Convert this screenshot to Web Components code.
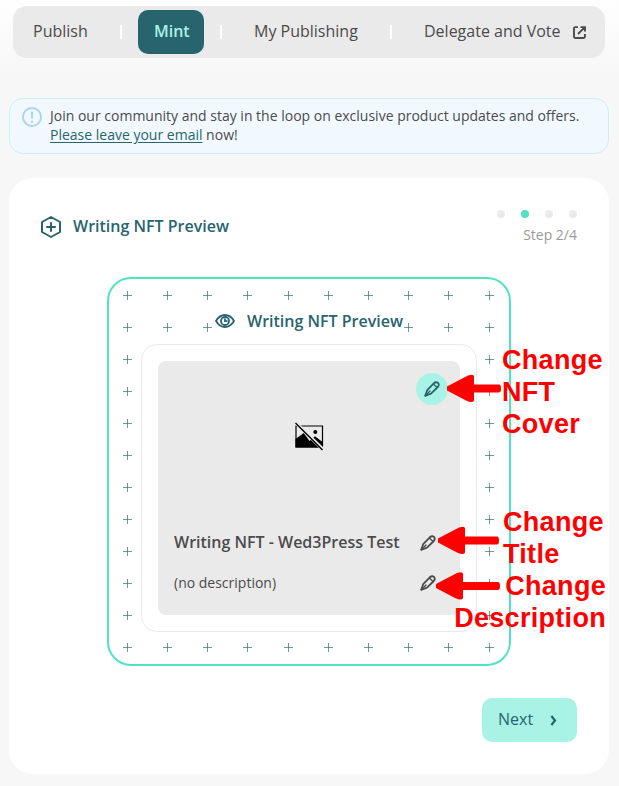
<!DOCTYPE html>
<html lang="en">
<head>
<meta charset="utf-8">
<title>Writing NFT Preview</title>
<style>
html{height:100%}
body{margin:0;height:786px;overflow:hidden;background:#f7f7f7 linear-gradient(#fefefe,#f7f7f7 77px) no-repeat;background-size:100% 77px;font-family:"Open Sans","Noto Sans",sans-serif;color:#4b4b4b}
</style>
</head>
<body>
<mint-page></mint-page>
<script>
const define = (name, html, setup) => customElements.define(name, class extends HTMLElement {
  constructor() {
    super();
    const t = document.createElement('template');
    t.innerHTML = html;
    this.attachShadow({ mode: 'open' }).append(t.content.cloneNode(true));
    if (setup) setup(this.shadowRoot, this);
  }
});

define('pencil-icon', `<style>:host{display:block;width:16px;height:16px}svg{display:block}</style>
<svg width="16" height="16" viewBox="0 0 16 16" fill="none" stroke="currentColor" stroke-width="1.8" stroke-linejoin="round" stroke-linecap="round"><path d="M1.2 14.8 3.2 9.2 9.8 2.3Q12 .4 14 1.9 15.6 3.8 13.8 6L7 12.7Z"/><path d="M1.2 14.8 6 10" stroke-width="1.3"/><path d="M9.8 3.4 12.8 6.2" stroke-width="1.3"/></svg>`);

define('nav-item', `<style>:host{display:flex;align-items:center;height:44px;font-size:16px;line-height:22px;gap:12px;white-space:nowrap;box-sizing:border-box;padding:0 16px 2px;border-radius:10px}
:host([active]){background:#28646e;color:#a9f2e6;font-weight:600}</style><slot></slot>`);

define('nav-divider', `<style>:host{display:block;width:2px;height:14px;background:#fff}</style>`);

define('top-nav', `<style>:host{display:grid;grid-template-columns:103px 2px 16px 66px 16px 2px 16px 136px 16px 2px 16px 1fr;align-items:center;box-sizing:border-box;margin:6px 14px 0 13px;height:52px;padding-left:4px;border-radius:14px;background:#eaeaea}
i{display:block}svg{display:block;margin-top:2px}</style>
<nav-item>Publish</nav-item><nav-divider></nav-divider><i></i><nav-item active>Mint</nav-item><i></i><nav-divider></nav-divider><i></i><nav-item>My Publishing</nav-item><i></i><nav-divider></nav-divider><i></i>
<nav-item>Delegate and Vote<svg width="13" height="13" viewBox="0 0 13 13" fill="none" stroke="currentColor" stroke-width="1.9"><path d="M5 1.1H2.2Q1 1.1 1 2.3V10.8Q1 12 2.2 12H10.7Q11.9 12 11.9 10.8V8M5 8 11.3 1.7M7.5 1.1H12V5.5"/></svg></nav-item>`);

define('info-banner', `<style>:host{display:flex;box-sizing:border-box;margin:40px 10px 0 9px;height:56px;padding:7px 12px;gap:8px;border:1px solid #cbedff;border-radius:14px;background:#f1f9ff;font-size:14px;line-height:19px;white-space:nowrap}
svg{flex:none;display:block;margin-top:1px}</style>
<svg width="20" height="20" viewBox="0 0 20 20" fill="none" stroke="#a9d5e6" stroke-width="2"><circle cx="10" cy="10" r="9"/><path d="M10 4.4V11.6M10 13.8V15.8"/></svg>
<div><slot></slot></div>`);

define('step-dots', `<style>:host{display:flex;flex-direction:column;align-items:flex-end;font-size:14px;line-height:20px;color:#999}
div{display:flex;gap:16px;margin-bottom:7px}i{width:8px;height:8px;border-radius:50%;background:#eaeaea}i.on{background:#50e3c2}</style>
<div><i></i><i class="on"></i><i></i><i></i></div><span>Step 2/4</span>`);

define('section-title', `<style>:host{display:flex;align-items:center;gap:12px;font-size:16px;line-height:22px;font-weight:600;color:#28646e;white-space:nowrap}::slotted(svg){display:block;flex:none}</style><slot name="icon"></slot><span><slot></slot></span>`);

define('edit-row', `<style>:host{display:flex;align-items:center;justify-content:space-between;white-space:nowrap;height:22px}pencil-icon{margin-top:2px}</style><slot></slot><pencil-icon></pencil-icon>`);

define('nft-cover', `<style>:host{display:flex;flex-direction:column;box-sizing:border-box;width:302px;height:254px;border-radius:8px;background:#eaeaea;padding:12px 24px 0 16px}
.edit{align-self:flex-end;display:grid;place-items:center;width:32px;height:32px;border-radius:50%;background:#a9f2e6;color:#28646e;margin-right:-12px}
.broken{display:block;align-self:center;margin:16px 0 0 8px}
.t{font-size:16px;font-weight:600;margin-top:80px}.d{font-size:14px;margin-top:18px}</style>
<div class="edit"><pencil-icon></pencil-icon></div>
<svg class="broken" width="30" height="30" viewBox="0 0 30 30"><path d="M2 5H28.5V26H2Z" fill="none" stroke="#000" stroke-width="1.2"/><path d="M1.5 18 9.8 12 15.5 20 21 15.3 28.5 21V26.5H1.5Z"/><circle cx="21.3" cy="11" r="2"/><path d="M2 2 29 28.5" stroke="#eaeaea" stroke-width="3.4"/><path d="M1.5 2 28.5 29" stroke="#000" stroke-width="1.4"/></svg>
<edit-row class="t"><span>Writing NFT - Wed3Press Test</span></edit-row>
<edit-row class="d"><span>(no description)</span></edit-row>`);

define('preview-frame', `<style>:host{display:grid;box-sizing:border-box;width:404px;height:389px;border:2px solid #50e3c2;border-radius:24px}
#grid,main{grid-area:1/1}#grid{display:block}main{display:flex;flex-direction:column;align-items:center;padding-top:31px}
section-title{background:#fff}.box{display:grid;place-items:center;box-sizing:border-box;width:336px;height:288px;margin-top:12px;border:1px solid #eaeaea;border-radius:16px;background:#fff}</style>
<svg id="grid" width="400" height="385" stroke="#28646e" stroke-opacity=".65" stroke-width="1"><path/></svg>
<main><section-title><svg slot="icon" width="20" height="14" viewBox="0 0 20 14" fill="none" stroke="#28646e" stroke-width="1.8"><path d="M1 7Q4.5 1 10 1T19 7Q15.5 13 10 13T1 7Z"/><circle cx="10" cy="7" r="4"/><path d="M10 4.5V7.2H12.5"/></svg>Writing NFT Preview</section-title>
<div class="box"><nft-cover></nft-cover></div></main>`, root => {
  const cols = [18, 58, 98, 138, 179, 219, 259, 299, 339, 380];
  let d = '';
  for (let r = 0; r < 12; r++) for (const x of cols) {
    const y = 16 + r * 32;
    d += `M${x - 4} ${y + .5}h9M${x + .5} ${y - 4}v9`;
  }
  root.querySelector('#grid path').setAttribute('d', d);
});

define('next-button', `<style>:host{display:flex;align-items:center;gap:17px;box-sizing:border-box;width:95px;height:44px;padding:0 0 2px 16px;border-radius:10px;background:#a9f2e6;color:#28646e;font-size:16px;line-height:22px}svg{display:block;margin-top:2px}</style><slot></slot>
<svg width="7" height="11" viewBox="0 0 7 11" fill="none" stroke="currentColor" stroke-width="2.2"><path d="M1.4 1 5 5.5 1.4 10"/></svg>`);

define('red-notes', `<style>:host{position:absolute;inset:0;width:619px;height:786px;pointer-events:none;color:#f00;font:bold 27px/32px "Liberation Sans",Arial,sans-serif}
svg{position:absolute;left:0;top:0}p{position:absolute;margin:0;white-space:pre;letter-spacing:.3px}</style>
<svg width="619" height="786" fill="#f00"><path id="a"/><path id="b"/><path id="c"/></svg>
<p style="left:502px;top:344px">Change
NFT
Cover</p><p style="left:503px;top:506px">Change
Title</p><p style="right:13px;top:570px;text-align:right">Change
Description</p>`, root => {
  const arrow = (x, y, end) => `M${x} ${y - 2}L${x + 21} ${y - 13}Q${x + 27} ${y - 15} ${x + 27} ${y - 12}V${y - 4}H${end - 2}Q${end} ${y - 4} ${end} ${y}T${end - 2} ${y + 4}H${x + 27}V${y + 12}Q${x + 26} ${y + 15} ${x + 19} ${y + 12}L${x} ${y + 2}Z`;
  [['a', 447, 388.5, 501], ['b', 438, 540.5, 499], ['c', 436, 586, 500]].forEach(([id, ...v]) => root.getElementById(id).setAttribute('d', arrow(...v)));
});

define('wizard-card', `<style>:host{display:flex;flex-direction:column;box-sizing:border-box;margin:24px 10px 0 9px;height:596px;padding:32px;border-radius:24px;background:#fff}
header{display:flex;justify-content:space-between;height:67px}header section-title{height:31px}header section-title svg{margin-top:2px}
preview-frame{align-self:center;margin-left:0}next-button{align-self:flex-end;margin-top:32px}</style>
<header><section-title><svg slot="icon" width="20" height="22" viewBox="0 0 20 22" fill="none" stroke="#28646e" stroke-width="2" stroke-linejoin="round"><path d="M10 1 19 6V16L10 21 1 16V6ZM5.2 11H14.8M10 6.2V15.8"/></svg>Writing NFT Preview</section-title><step-dots></step-dots></header>
<preview-frame></preview-frame><next-button>Next</next-button>`);

define('mint-page', `<style>:host{display:flow-root;width:619px;height:786px}u{color:#28646e;text-underline-offset:2px}</style>
<top-nav></top-nav><info-banner>Join our community and stay in the loop on exclusive product updates and offers.<br><u>Please leave your email</u> now!</info-banner><wizard-card></wizard-card><red-notes></red-notes>`);
</script>
</body>
</html>
